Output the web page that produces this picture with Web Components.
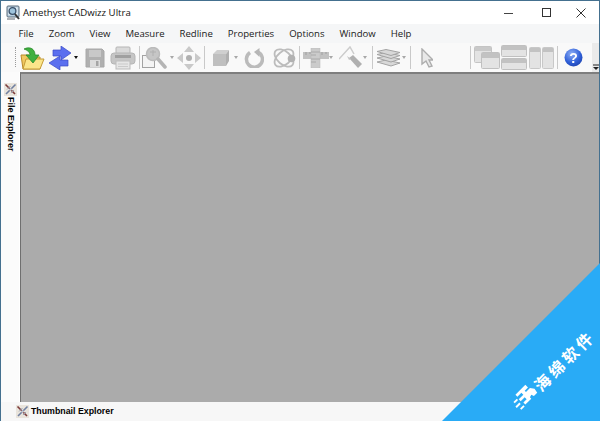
<!DOCTYPE html>
<html><head><meta charset="utf-8">
<style>
html,body{margin:0;padding:0;width:600px;height:421px;overflow:hidden;background:#fff;font-family:"Open Sans","Noto Sans",sans-serif}
</style></head>
<body>
<app-window>
  <title-bar slot="title">Amethyst CADwizz Ultra</title-bar>
  <menu-bar slot="menu"><menu-item>File</menu-item><menu-item>Zoom</menu-item><menu-item>View</menu-item><menu-item>Measure</menu-item><menu-item>Redline</menu-item><menu-item>Properties</menu-item><menu-item>Options</menu-item><menu-item>Window</menu-item><menu-item>Help</menu-item></menu-bar>
  <tool-bar slot="tools">
    <tool-icon name="open" w="25" style="margin-left:5px"></tool-icon>
    <tool-icon name="swap" w="24" style="margin-left:3px"></tool-icon>
    <tool-drop dark style="margin-left:2px"></tool-drop>
    <tool-icon name="save" w="20" style="margin-left:6px"></tool-icon>
    <tool-icon name="print" w="26" style="margin-left:5px"></tool-icon>
    <tool-sep style="margin-left:3px"></tool-sep>
    <tool-icon name="zoom" w="27" style="margin-left:2px"></tool-icon>
    <tool-drop style="margin-left:1px"></tool-drop>
    <tool-icon name="pan" w="24" style="margin-left:2px"></tool-icon>
    <tool-sep style="margin-left:3px"></tool-sep>
    <tool-icon name="cube" w="18" style="margin-left:7px"></tool-icon>
    <tool-drop style="margin-left:4px"></tool-drop>
    <tool-icon name="rotate" w="20" style="margin-left:5px"></tool-icon>
    <tool-icon name="orbit" w="24" style="margin-left:9px"></tool-icon>
    <tool-sep style="margin-left:2px"></tool-sep>
    <tool-icon name="ruler" w="26" style="margin-left:3px"></tool-icon>
    <tool-drop style="margin-left:0"></tool-drop>
    <tool-icon name="redline" w="24" style="margin-left:5px"></tool-icon>
    <tool-drop style="margin-left:0"></tool-drop>
    <tool-sep style="margin-left:4px"></tool-sep>
    <tool-icon name="layers" w="25" style="margin-left:3px"></tool-icon>
    <tool-drop style="margin-left:1px"></tool-drop>
    <tool-sep style="margin-left:3px"></tool-sep>
    <tool-icon name="cursor" w="12" style="margin-left:10px"></tool-icon>
    <tool-sep style="margin-left:37px"></tool-sep>
    <tool-icon name="cascade" w="26" style="margin-left:3px"></tool-icon>
    <tool-icon name="rows" w="26" style="margin-left:1px"></tool-icon>
    <tool-icon name="cols" w="25" style="margin-left:2px"></tool-icon>
    <tool-sep style="margin-left:3px"></tool-sep>
    <tool-icon name="help" w="19" style="margin-left:6px"></tool-icon>
    <tool-chevron></tool-chevron>
  </tool-bar>
  <side-tab slot="side">File Explorer</side-tab>
  <view-port slot="view"></view-port>
  <bottom-tab slot="bottom">Thumbnail Explorer</bottom-tab>
</app-window>
<corner-ribbon></corner-ribbon>
<script>
const pin=`<svg width="13" height="13" viewBox="0 0 13 13"><rect width="13" height="13" fill="#e9e4dc"/><path d="M1.5 1.5L11 11" stroke="#7b3a3a" stroke-width="1.6"/><path d="M11.5 1.5L2 11" stroke="#6f7fa0" stroke-width="1.6"/><path d="M3 6.5L6.5 3M7 10l3-3" stroke="#9aa5b5" stroke-width="1"/><circle cx="6.5" cy="6.5" r="1.3" fill="#c8ccd4"/></svg>`;
function def(name,css,html){
  customElements.define(name,class extends HTMLElement{
    constructor(){super();const s=this.attachShadow({mode:'open'});s.innerHTML=`<style>${css}</style>${html}`;}
  });
}
def('app-window',`:host{display:grid;width:600px;height:421px;box-sizing:border-box;border-top:1px solid #44708f;border-left:1px solid #44708f;border-right:1px solid #44708f;background:#fff;grid-template-columns:18px 1fr;grid-template-rows:23px 19px 29px 1fr 19px;grid-template-areas:"t t" "m m" "b b" "s v" "f f"}
 ::slotted([slot=title]){grid-area:t}::slotted([slot=menu]){grid-area:m}::slotted([slot=tools]){grid-area:b}::slotted([slot=side]){grid-area:s}::slotted([slot=view]){grid-area:v}::slotted([slot=bottom]){grid-area:f}`,
 `<slot name="title"></slot><slot name="menu"></slot><slot name="tools"></slot><slot name="side"></slot><slot name="view"></slot><slot name="bottom"></slot>`);
def('title-bar',`:host{display:flex;align-items:center;background:#fff;color:#111;font-size:9.65px;min-width:0}
 svg{margin:0 2px 0 5px;flex:none}.sp{flex:1}.b{width:34px;display:flex;justify-content:center;align-items:center;flex:none}`,
 `<svg width="15" height="16" viewBox="0 0 15 16"><rect x="1" y="1" width="12" height="11" rx="1" fill="#b8cfe0" stroke="#5d6d7b"/><rect x="2.5" y="2.5" width="9" height="7.5" fill="#e6f0f6"/><circle cx="6.5" cy="6" r="3.4" fill="#9fc4dc" stroke="#39506a" stroke-width="1.3"/><path d="M9 9l4 5" stroke="#333" stroke-width="2"/><path d="M1 14h8" stroke="#8a9097" stroke-width="1.4"/></svg><slot></slot><span class="sp"></span>
 <span class="b" style="margin-right:4px"><svg style="margin:0" width="10" height="10"><path d="M0 5.5h9" stroke="#444"/></svg></span>
 <span class="b"><svg style="margin:0" width="10" height="10"><rect x=".5" y=".5" width="8" height="8" fill="none" stroke="#333"/></svg></span>
 <span class="b" style="margin-right:-3px"><svg style="margin:0" width="10" height="10"><path d="M.5.5l9 9M9.5.5l-9 9" stroke="#333"/></svg></span>
 <span style="width:4px;flex:none"></span>`);
def('menu-bar',`:host{display:flex;align-items:center;background:#f5f6f7;padding-left:10px;min-width:0}`,`<slot></slot>`);
def('menu-item',`:host{display:block;padding:0 7.5px;font-size:9.58px;color:#1a1a1a;line-height:19px;white-space:nowrap}`,`<slot></slot>`);
def('tool-bar',`:host{display:flex;align-items:center;position:relative;background:#f9f9f9;padding-left:14px;height:29px;box-sizing:border-box;min-width:0}
 .g{position:absolute;left:14px;top:4px;height:20px;border-left:1px dotted #9a9a9a}`,`<span class="g"></span><slot></slot>`);
const icons={
open:`<svg viewBox="0 0 25 24"><path d="M1 9h8l2 2h9v12H3z" fill="#f0c860" stroke="#b98a2a"/><path d="M3 23l3-10h18l-4 10z" fill="#fbe58a" stroke="#c49a35"/><path d="M4 3c6-3 11 0 11 6h4l-6 8-7-8h4c0-3-3-5-6-6z" fill="#3fb040" stroke="#2a8a2a" stroke-width=".8"/></svg>`,
swap:`<svg viewBox="0 0 24 24"><path d="M5 4h8V0l10 7-10 7v-4H5z" fill="#5b6fef" stroke="#3a49c4" stroke-width=".7"/><path d="M20 14h-8v-4L1 17l11 7v-4h8z" fill="#5b6fef" stroke="#3a49c4" stroke-width=".7"/></svg>`,
save:`<svg viewBox="0 0 20 20"><path d="M1 1h16l2 2v16H1z" fill="#b0b0b0" stroke="#a8a8a8"/><rect x="4" y="2" width="12" height="7" fill="#c8c8c8"/><rect x="5" y="12" width="10" height="7" fill="#dcdcdc"/><rect x="11" y="13" width="2.5" height="5" fill="#a5a5a5"/></svg>`,
print:`<svg viewBox="0 0 26 24"><rect x="6" y="1" width="14" height="7" rx="1" fill="#dadada" stroke="#b5b5b5"/><rect x="1" y="7" width="24" height="11" rx="3" fill="#c6c6c6" stroke="#b5b5b5"/><rect x="5" y="9" width="16" height="3" fill="#a0a0a0"/><rect x="6" y="15" width="14" height="8" fill="#e6e6e6" stroke="#bdbdbd"/><path d="M8 18h10M8 20.500h10" stroke="#cacaca"/></svg>`,
zoom:`<svg viewBox="0 0 27 22"><rect x=".5" y="8.500" width="12" height="12" fill="#f4f4f4" stroke="#a3a3a3"/><circle cx="11" cy="7" r="6.500" fill="#c6c6c6" stroke="#bbb" stroke-width="1.500"/><path d="M8 5h6M11 3v6" stroke="#b0b0b0"/><path d="M16 12l7 8" stroke="#b4b4b4" stroke-width="3.500" stroke-linecap="round"/></svg>`,
pan:`<svg viewBox="0 0 24 24"><path d="M12 0l5 6H7zM12 24l5-6H7zM0 12l6-5v10zM24 12l-6-5v10z" fill="#c9c9c9"/><circle cx="12" cy="12" r="3" fill="#b0b0b0"/></svg>`,
cube:`<svg viewBox="0 0 18 18"><path d="M1 5l4-4h12l-3 4z" fill="#cfcfcf"/><rect x="1" y="5" width="13" height="12" fill="#bfbfbf"/><path d="M14 5l3-4v11l-3 5z" fill="#afafaf"/></svg>`,
rotate:`<svg viewBox="0 0 20 20"><path d="M6 4.500A8 8 0 1 0 14 4" fill="none" stroke="#bbb" stroke-width="3.500"/><path d="M15.500 0v9L10 4z" fill="#b6b6b6"/></svg>`,
orbit:`<svg viewBox="0 0 24 22"><ellipse cx="11" cy="11" rx="11" ry="6.500" transform="rotate(40 11 11)" fill="none" stroke="#bcbcbc" stroke-width="1.800"/><ellipse cx="11" cy="11" rx="11" ry="6.500" transform="rotate(-40 11 11)" fill="none" stroke="#bcbcbc" stroke-width="1.800"/><circle cx="18.500" cy="11.500" r="3.800" fill="#b2b2b2"/></svg>`,
ruler:`<svg viewBox="0 0 26 20"><rect x="0" y="4" width="26" height="7" fill="#c2c2c2"/><path d="M3 4v3M7 4v2M11 4v3M15 4v2M19 4v3M23 4v2" stroke="#a0a0a0"/><rect x="8" y="0" width="9" height="20" fill="#cbcbcb" stroke="#b8b8b8" stroke-width=".5"/><path d="M8 4h9M8 7h5M8 11h9M8 14h5" stroke="#aaa"/></svg>`,
redline:`<svg viewBox="0 0 24 23"><path d="M0 13L11 1l4 7" fill="none" stroke="#cccccc" stroke-width="1.500"/><path d="M10 12l4-3 9 9-4 4z" fill="#b0b0b0"/><path d="M8 10l4 3-2 1z" fill="#c2c2c2"/></svg>`,
layers:`<svg viewBox="0 0 25 18"><g fill="#d8d8d8" stroke="#a3a3a3"><path d="M1 13l9-2 14 3-9 3z"/><path d="M1 9l9-2 14 3-9 3z"/><path d="M1 5.500l9-2 14 3-9 3z"/><path d="M1 2.500l9-2 14 3-9 3z"/></g></svg>`,
cursor:`<svg viewBox="0 0 12 20"><path d="M1 1v15l4-3 3 6 3-1-3-6h4z" fill="#e8e8e8" stroke="#adadad" stroke-width="1.400"/></svg>`,
cascade:`<svg viewBox="0 0 26 23"><rect x=".5" y=".5" width="17" height="16" rx="1" fill="#e3e3e3" stroke="#c4c4c4"/><rect x="1" y="1" width="16" height="4" fill="#c9c9c9"/><rect x="7.500" y="6.500" width="18" height="16" rx="1" fill="#e3e3e3" stroke="#c0c0c0"/><rect x="8" y="7" width="17" height="5" fill="#c2c2c2"/></svg>`,
rows:`<svg viewBox="0 0 26 25"><rect x=".5" y=".5" width="25" height="11" rx="1" fill="#e3e3e3" stroke="#c0c0c0"/><rect x="1" y="1" width="24" height="4" fill="#c2c2c2"/><rect x=".5" y="13.500" width="25" height="11" rx="1" fill="#e3e3e3" stroke="#c0c0c0"/><rect x="1" y="14" width="24" height="4" fill="#c2c2c2"/></svg>`,
cols:`<svg viewBox="0 0 25 22"><rect x=".5" y=".5" width="11" height="21" rx="1" fill="#e3e3e3" stroke="#c8c8c8"/><rect x="1" y="1" width="10" height="4" fill="#c2c2c2"/><rect x="13.500" y=".5" width="11" height="21" rx="1" fill="#e3e3e3" stroke="#c8c8c8"/><rect x="14" y="1" width="10" height="4" fill="#c2c2c2"/></svg>`,
help:`<svg viewBox="0 0 19 19"><defs><radialGradient id="h" cx=".4" cy=".3" r=".8"><stop offset="0" stop-color="#8fb0f5"/><stop offset=".6" stop-color="#2f5fd8"/><stop offset="1" stop-color="#1c3fa8"/></radialGradient></defs><circle cx="9.500" cy="9.500" r="9" fill="url(#h)"/><text x="9.500" y="14.500" text-anchor="middle" font-family="Liberation Sans" font-weight="700" font-size="14" fill="#fff">?</text></svg>`
};
customElements.define('tool-icon',class extends HTMLElement{
  constructor(){super();this.attachShadow({mode:'open'});}
  connectedCallback(){const w=+this.getAttribute('w');this.shadowRoot.innerHTML=`<style>:host{display:flex;flex:none;width:${w}px;justify-content:center;align-items:center}svg{display:block;width:${w}px;height:auto;filter:blur(.5px)}</style>${icons[this.getAttribute('name')]}`;}
});
def('tool-drop',`:host{display:block;flex:none;width:5px;height:3px}i{display:block;width:0;height:0;border:2.500px solid transparent;border-top:3px solid #a8a8a8;border-bottom:0}:host([dark]) i{border-top-color:#111}`,`<i></i>`);
def('tool-sep',`:host{display:block;flex:none;width:1px;height:23px;background:#c9c9c9}`,``);
def('tool-chevron',`:host{position:absolute;right:0;top:0;bottom:0;width:7px;background:#eaeaea;display:flex;align-items:flex-end;justify-content:center;padding-bottom:1px}svg{display:block}`,`<svg width="6" height="7"><path d="M0 1h6" stroke="#222"/><path d="M0 3h6l-3 3z" fill="#222"/></svg>`);
def('side-tab',`:host{display:flex;flex-direction:column;align-items:center;background:#fbfbfb;padding-top:11px;color:#000;font:700 9px/1 "Liberation Sans",sans-serif;min-height:0}
 svg{flex:none}span{writing-mode:vertical-rl;margin-top:1px;white-space:nowrap}`,`${pin}<span><slot></slot></span>`);
def('view-port',`:host{display:block;background:#ababab;border-left:1px solid #6f6f6f;margin-left:1px;border-top:2px solid #7e7e7e;min-height:0}`,``);
def('bottom-tab',`:host{display:flex;align-items:center;background:#f7f7f7;padding-left:15px;gap:2px;color:#000;font:700 8.8px/1 "Liberation Sans",sans-serif}`,`${pin}<slot></slot>`);
def('corner-ribbon',`:host{position:absolute;left:0;top:0;width:600px;height:421px;pointer-events:none;display:block}
 .t{position:absolute;inset:0;background:#29abf6;clip-path:polygon(600px 263px,600px 421px,442px 421px)}
 .w{position:absolute;left:564px;top:360px;transform:translate(-50%,-50%) rotate(-45deg);color:#fff;font:700 16px/1 "Noto Sans CJK SC",sans-serif;letter-spacing:3.5px;white-space:nowrap}
 svg{position:absolute;left:511px;top:382px}`,
 `<div class="t"></div><div class="w">海绵软件</div>
 <svg width="30" height="28" viewBox="0 0 32 30"><g transform="rotate(-45 16 15)" fill="#fff"><path d="M9 6h15v4h-5v2h6l3 4-1 5h-5l-1-3-3 1v2H9v-3h5v-3H8v-3h7v-3H9z"/><rect x="2" y="10" width="5" height="2"/><rect x="0" y="15" width="6" height="2"/><rect x="2" y="20" width="5" height="2"/></g></svg>`);
</script>
</body></html>
